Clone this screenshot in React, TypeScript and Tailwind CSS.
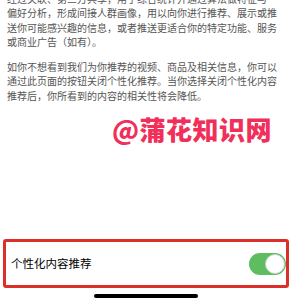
import React from 'react';

const para1 = [
  '经过关联、第三方共享，用于综合统计并通过算法做特征与',
  '偏好分析，形成间接人群画像，用以向你进行推荐、展示或推',
  '送你可能感兴趣的信息，或者推送更适合你的特定功能、服务',
  '或商业广告（如有）。',
];

const para2 = [
  '如你不想看到我们为你推荐的视频、商品及相关信息，你可以',
  '通过此页面的按钮关闭个性化推荐。当你选择关闭个性化内容',
  '推荐后，你所看到的内容的相关性将会降低。',
];

export default function App() {
  return (
    <div
      className="w-[292px] h-[301px] overflow-hidden bg-white flex flex-col"
      style={{ fontFamily: '"Noto Sans CJK SC", "Noto Sans", sans-serif' }}
    >
      {/* Body text */}
      <div className="px-[7px] text-[10px] leading-[14.3px] text-[#555]">
        <p className="mt-[-8px]">
          {para1.map((l) => (
            <span key={l} className="block whitespace-nowrap">{l}</span>
          ))}
        </p>
        <p className="mt-[11px]">
          {para2.map((l) => (
            <span key={l} className="block whitespace-nowrap">{l}</span>
          ))}
        </p>
      </div>

      {/* Watermark */}
      <div className="flex justify-end pr-[20px] mt-[11px]">
        <span className="text-[26px] leading-[30px] font-black text-[#f0305a] tracking-[0.5px]">
          @蒲花知识网
        </span>
      </div>

      {/* Setting row with highlight */}
      <div className="mt-auto mb-[6px] mx-[3px] h-[49px] border-[3px] border-[#dc2f2a] rounded-[3px] flex items-center justify-between pl-[5px] pr-[0px]">
        <span className="text-[11.5px] text-black">个性化内容推荐</span>
        <div className="w-[37px] h-[22px] rounded-full bg-[#5dbd5f] flex items-center justify-end p-[1px]">
          <div className="w-[20px] h-[20px] rounded-full bg-white border border-[#cfcfcf]" />
        </div>
      </div>

      {/* Home indicator */}
      <div className="flex justify-center pb-[3px]">
        <div className="w-[104px] h-[4px] rounded-full bg-black" />
      </div>
    </div>
  );
}
